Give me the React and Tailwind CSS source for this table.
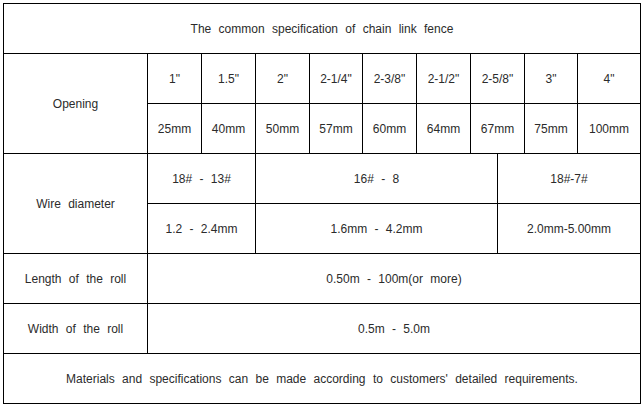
const openings = [
  ['1"', '25mm', 'w-[54px]'],
  ['1.5"', '40mm', 'w-[54px]'],
  ['2"', '50mm', 'w-[54px]'],
  ['2-1/4"', '57mm', 'w-[53px]'],
  ['2-3/8"', '60mm', 'w-[54px]'],
  ['2-1/2"', '64mm', 'w-[54px]'],
  ['2-5/8"', '67mm', 'w-[54px]'],
  ['3"', '75mm', 'w-[53px]'],
  ['4"', '100mm', 'flex-1'],
];

function Cell({ className = '', children }) {
  return (
    <div className={`flex items-center justify-center ${className}`}>{children}</div>
  );
}

export default function App() {
  return (
    <div className="w-[644px] h-[405px] bg-white pt-[3px] pl-[3px]">
      <div
        className="w-[638px] border border-black text-[12px] text-[#2b2b2b] [word-spacing:4px]"
        style={{ fontFamily: '"Liberation Sans", Arial, sans-serif' }}
      >
        {/* Title */}
        <Cell className="h-[50px] border-b border-black">
          The common specification of chain link fence
        </Cell>

        {/* Opening */}
        <div className="flex h-[100px] border-b border-black">
          <Cell className="w-[144px] border-r border-black">Opening</Cell>
          <div className="flex-1 flex flex-col">
            <div className="flex h-[50px] border-b border-black">
              {openings.map(([inch, , w], i) => (
                <Cell key={inch} className={`${w} ${i < openings.length - 1 ? 'border-r border-black' : ''}`}>
                  {inch}
                </Cell>
              ))}
            </div>
            <div className="flex flex-1">
              {openings.map(([inch, mm, w], i) => (
                <Cell key={inch} className={`${w} ${i < openings.length - 1 ? 'border-r border-black' : ''}`}>
                  {mm}
                </Cell>
              ))}
            </div>
          </div>
        </div>

        {/* Wire diameter */}
        <div className="flex h-[100px] border-b border-black">
          <Cell className="w-[144px] border-r border-black">Wire diameter</Cell>
          <div className="flex-1 flex flex-col">
            <div className="flex h-[50px] border-b border-black">
              <Cell className="w-[108px] border-r border-black">18# - 13#</Cell>
              <Cell className="w-[242px] border-r border-black">16# - 8</Cell>
              <Cell className="flex-1">18#-7#</Cell>
            </div>
            <div className="flex flex-1">
              <Cell className="w-[108px] border-r border-black">1.2 - 2.4mm</Cell>
              <Cell className="w-[242px] border-r border-black">1.6mm - 4.2mm</Cell>
              <Cell className="flex-1">2.0mm-5.00mm</Cell>
            </div>
          </div>
        </div>

        {/* Roll */}
        <div className="flex h-[50px] border-b border-black">
          <Cell className="w-[144px] border-r border-black">Length of the roll</Cell>
          <Cell className="flex-1">0.50m - 100m(or more)</Cell>
        </div>
        <div className="flex h-[50px] border-b border-black">
          <Cell className="w-[144px] border-r border-black">Width of the roll</Cell>
          <Cell className="flex-1">0.5m - 5.0m</Cell>
        </div>

        {/* Note */}
        <Cell className="h-[49px]">
          Materials and specifications can be made according to customers' detailed requirements.
        </Cell>
      </div>
    </div>
  );
}
